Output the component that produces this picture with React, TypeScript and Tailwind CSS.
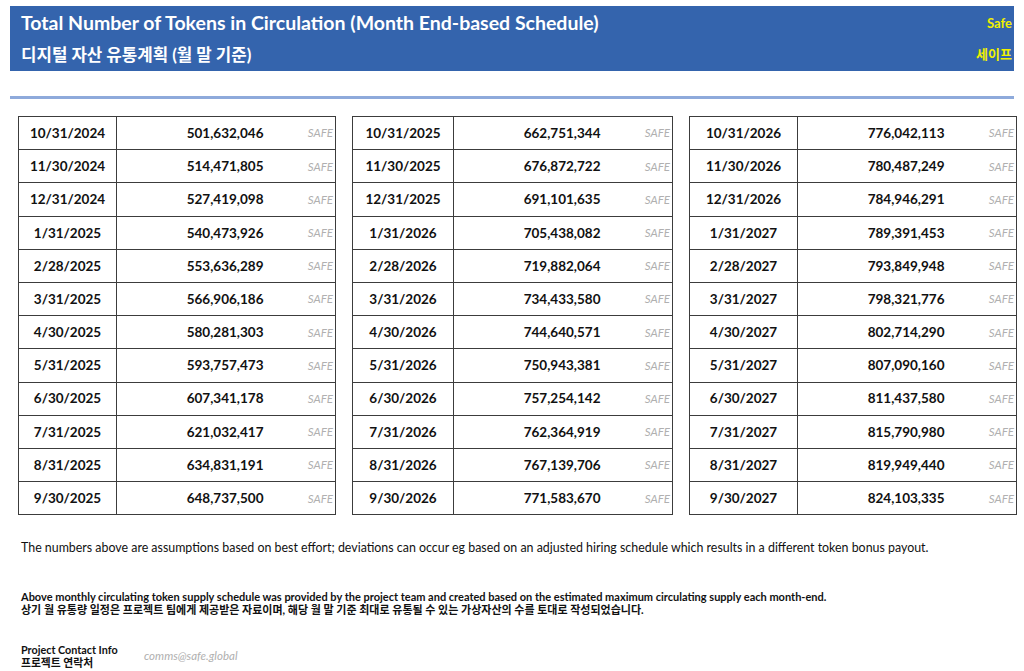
import React from 'react';

type Row = [string, string];

const tables: { dateW: string; rows: Row[] }[] = [
  {
    dateW: 'w-[98px]',
    rows: [
      ['10/31/2024', '501,632,046'],
      ['11/30/2024', '514,471,805'],
      ['12/31/2024', '527,419,098'],
      ['1/31/2025', '540,473,926'],
      ['2/28/2025', '553,636,289'],
      ['3/31/2025', '566,906,186'],
      ['4/30/2025', '580,281,303'],
      ['5/31/2025', '593,757,473'],
      ['6/30/2025', '607,341,178'],
      ['7/31/2025', '621,032,417'],
      ['8/31/2025', '634,831,191'],
      ['9/30/2025', '648,737,500'],
    ],
  },
  {
    dateW: 'w-[101px]',
    rows: [
      ['10/31/2025', '662,751,344'],
      ['11/30/2025', '676,872,722'],
      ['12/31/2025', '691,101,635'],
      ['1/31/2026', '705,438,082'],
      ['2/28/2026', '719,882,064'],
      ['3/31/2026', '734,433,580'],
      ['4/30/2026', '744,640,571'],
      ['5/31/2026', '750,943,381'],
      ['6/30/2026', '757,254,142'],
      ['7/31/2026', '762,364,919'],
      ['8/31/2026', '767,139,706'],
      ['9/30/2026', '771,583,670'],
    ],
  },
  {
    dateW: 'w-[108px]',
    rows: [
      ['10/31/2026', '776,042,113'],
      ['11/30/2026', '780,487,249'],
      ['12/31/2026', '784,946,291'],
      ['1/31/2027', '789,391,453'],
      ['2/28/2027', '793,849,948'],
      ['3/31/2027', '798,321,776'],
      ['4/30/2027', '802,714,290'],
      ['5/31/2027', '807,090,160'],
      ['6/30/2027', '811,437,580'],
      ['7/31/2027', '815,790,980'],
      ['8/31/2027', '819,949,440'],
      ['9/30/2027', '824,103,335'],
    ],
  },
];

const font = "font-['Lato','Noto_Sans_CJK_KR',sans-serif]";

function SupplyTable({ dateW, rows }: { dateW: string; rows: Row[] }) {
  return (
    <table className="w-full border-collapse border border-[#3c3c3c]">
      <tbody>
        {rows.map(([date, value]) => (
          <tr key={date} className="h-[33.2px] border-b border-[#3c3c3c]">
            <td className={`${dateW} border-r border-[#3c3c3c] text-center text-[13.5px] font-bold text-[#111]`}>
              {date}
            </td>
            <td className="text-right text-[13.5px] font-bold text-[#111]">{value}</td>
            <td className="w-[72px] pr-[2px] text-right text-[11.5px] italic text-[#b0b0b0]">SAFE</td>
          </tr>
        ))}
      </tbody>
    </table>
  );
}

export default function App() {
  return (
    <div className={`h-[671px] w-[1024px] overflow-hidden bg-white ${font}`}>
      <header className="mx-[10px] mt-[6px] flex h-[65px] flex-col gap-[10px] bg-[#3464ad] pl-[11px] pr-[2px] pt-[5px]">
        <div className="flex items-center justify-between">
          <h1 className="text-[19.5px] font-bold leading-[24px] text-white">
            Total Number of Tokens in Circulation (Month End-based Schedule)
          </h1>
          <span className="mt-[2px] text-[13px] font-bold text-[#f0f000]">Safe</span>
        </div>
        <div className="flex items-center justify-between">
          <h2 className="text-[16.8px] font-bold leading-[20px] text-white">디지털 자산 유통계획 (월 말 기준)</h2>
          <span className="text-[13px] font-bold text-[#f0f000]">세이프</span>
        </div>
      </header>

      <div className="mx-[10px] mt-[25px] h-[3px] bg-[#8eaadb]" />

      <div className="ml-[18px] mt-[17px] grid grid-cols-[318px_321px_328px] gap-4">
        {tables.map((t, i) => (
          <SupplyTable key={i} dateW={t.dateW} rows={t.rows} />
        ))}
      </div>

      <p className="ml-[21px] mt-[24px] text-[12.4px] text-[#111]">
        The numbers above are assumptions based on best effort; deviations can occur eg based on an adjusted hiring
        schedule which results in a different token bonus payout.
      </p>

      <div className="ml-[21px] mt-[32px] text-[11px] font-bold leading-[13px] text-[#111]">
        <p>
          Above monthly circulating token supply schedule was provided by the project team and created based on the
          estimated maximum circulating supply each month-end.
        </p>
        <p>상기 월 유통량 일정은 프로젝트 팀에게 제공받은 자료이며, 해당 월 말 기준 최대로 유통될 수 있는 가상자산의 수를 토대로 작성되었습니다.</p>
      </div>

      <div className="ml-[21px] mt-[27px] flex items-center">
        <div className="w-[123px] text-[10.8px] font-bold leading-[13px] text-[#111]">
          <p>Project Contact Info</p>
          <p>프로젝트 연락처</p>
        </div>
        <span className="text-[11.5px] italic text-[#b0b0b0]">comms@safe.global</span>
      </div>
    </div>
  );
}
